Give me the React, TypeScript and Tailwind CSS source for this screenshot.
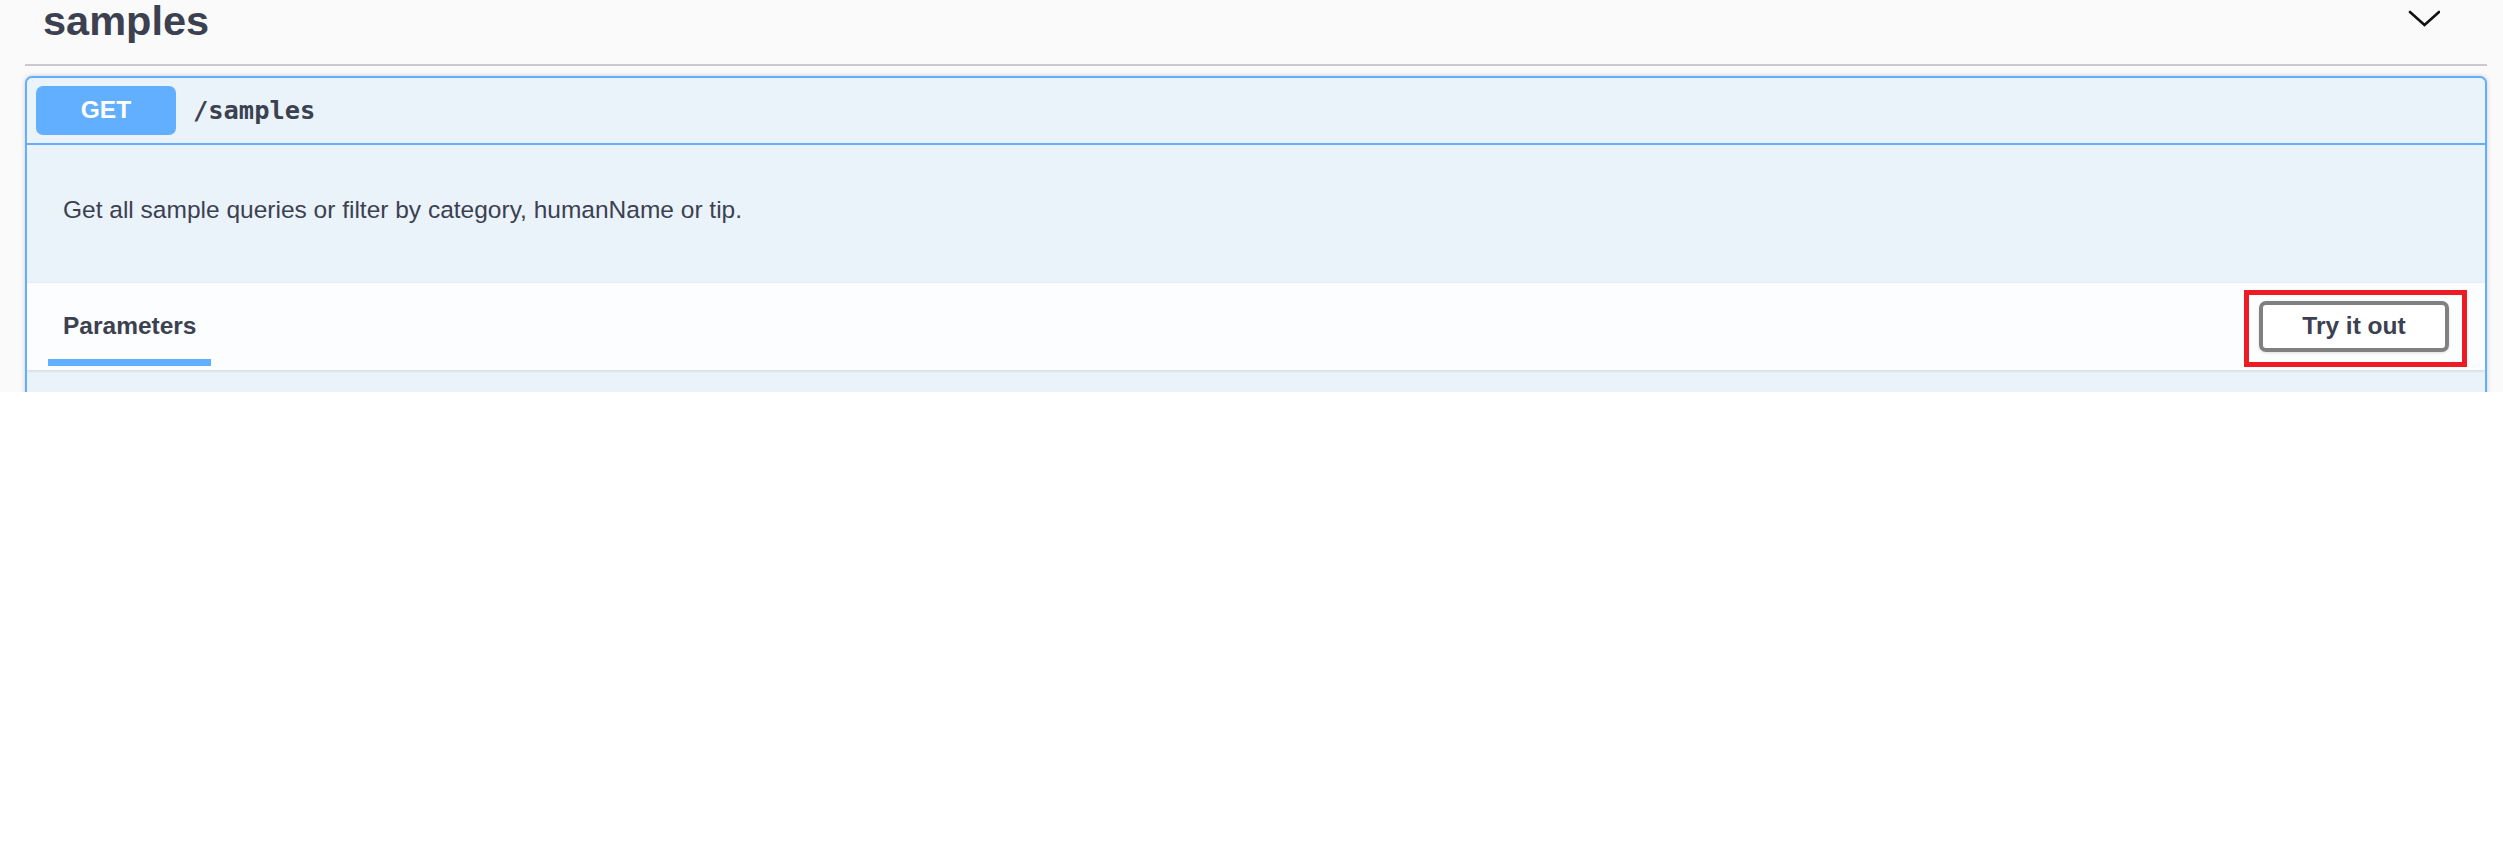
import React from "react";

export default function App() {
  return (
    <div className="min-h-screen w-full bg-white font-['Liberation_Sans',Arial,sans-serif] text-[#3b4151]">
      <div className="h-[392px] overflow-hidden bg-[#fafafa] pl-[25px] pr-[16px]">
        {/* Tag header */}
        <div className="flex h-[66px] items-start justify-between border-b-2 border-[#c9cacf]">
          <h3 className="ml-[18px] mt-[1px] text-[41.5px] font-bold leading-[40px] text-[#3b4151]">
            samples
          </h3>
          <svg
            className="mr-[47px] mt-[9px]"
            width="32"
            height="18"
            viewBox="0 0 32 18"
            fill="none"
          >
            <polyline
              points="2,3 16.5,16 31,3"
              stroke="#111"
              strokeWidth="2.6"
              strokeLinecap="round"
              strokeLinejoin="miter"
            />
          </svg>
        </div>

        {/* Operation block */}
        <div className="mt-[10px] overflow-hidden rounded-[7px] border-2 border-[#61affe] bg-[#ebf3fa] shadow-[0_0_5px_rgba(0,0,0,0.19)]">
          {/* Summary */}
          <div className="flex h-[67px] items-center border-b-2 border-[#61affe] pl-[9px]">
            <div className="flex h-[49px] w-[140px] items-center justify-center rounded-[7px] bg-[#61affe] text-[24.5px] font-bold text-white">
              GET
            </div>
            <span className="ml-[17px] font-['DejaVu_Sans_Mono',monospace] text-[25.4px] font-bold text-[#3b4151]">
              /samples
            </span>
          </div>

          {/* Description */}
          <div className="h-[138px] pl-[36px] pt-[51px]">
            <p className="text-[24.5px] leading-[28px] text-[#3b4151]">
              Get all sample queries or filter by category, humanName or tip.
            </p>
          </div>

          {/* Parameters header */}
          <div className="flex h-[87px] items-center justify-between bg-[#fbfdfe] pl-[21px] pr-[36px] shadow-[0_1px_3px_rgba(0,0,0,0.12)]">
            <div className="relative flex h-full items-center px-[15px]">
              <span className="text-[24.5px] font-bold text-[#3b4151]">Parameters</span>
              <div className="absolute bottom-[4px] left-0 right-0 h-[7px] bg-[#61affe]" />
            </div>
            <div className="relative">
              <button className="flex h-[51px] w-[190px] items-center justify-center rounded-[7px] border-4 border-[#808080] bg-white text-[24.5px] font-bold text-[#3b4151] shadow-[0_1px_3px_rgba(0,0,0,0.12)]">
                Try it out
              </button>
              <div className="pointer-events-none absolute -left-[15px] -top-[11px] h-[77px] w-[223px] border-[5px] border-[#ed1c24]" />
            </div>
          </div>

          {/* Rest of body (cut off) */}
          <div className="h-[60px]" />
        </div>
      </div>
    </div>
  );
}
